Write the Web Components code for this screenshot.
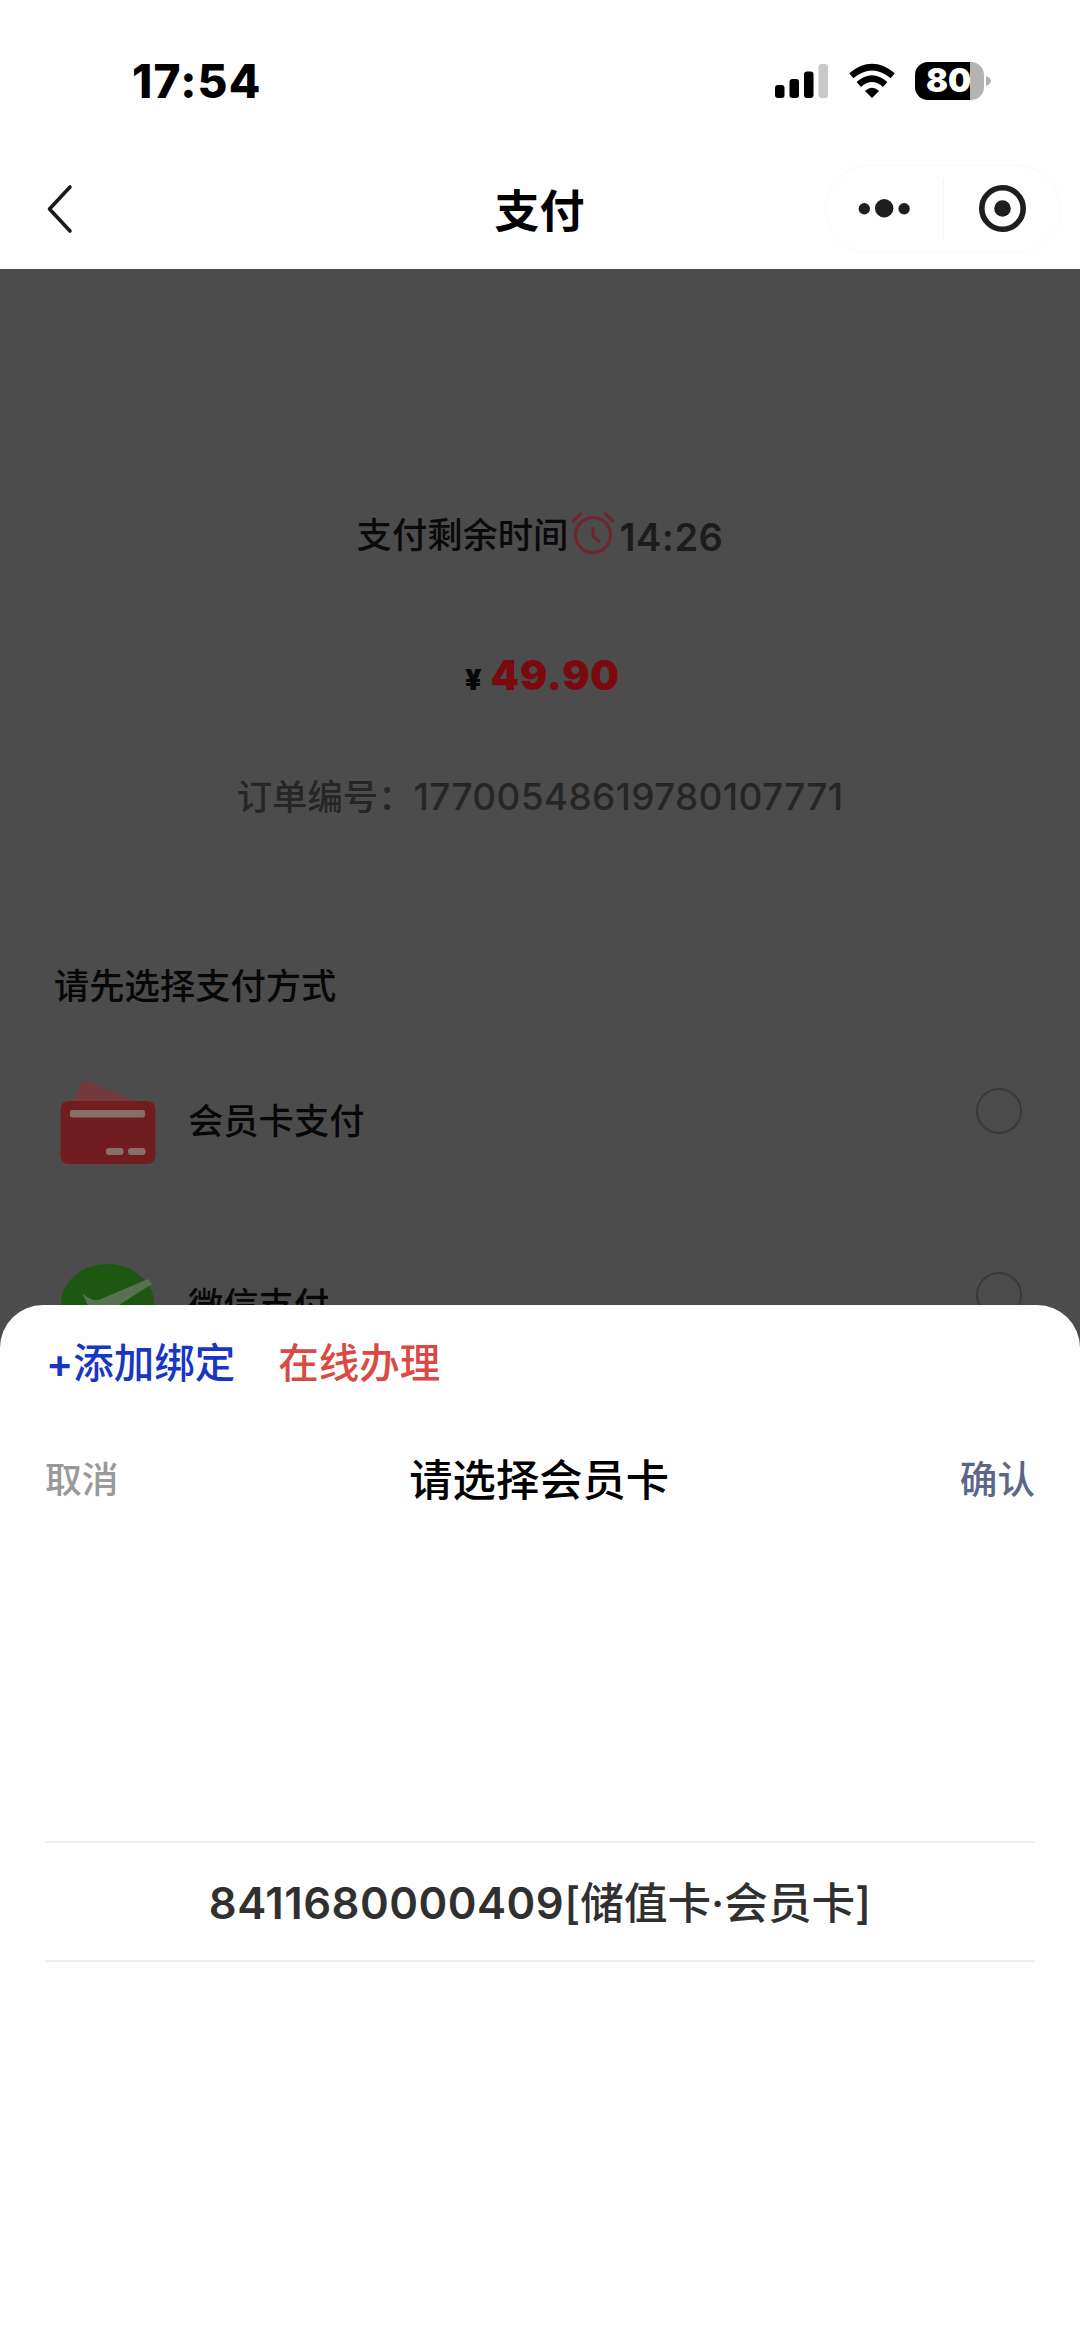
<!DOCTYPE html>
<html lang="zh-CN">
<head>
<meta charset="utf-8">
<title>支付</title>
<style>
	html, body {
		margin: 0;
		height: 2341px;
		overflow: hidden;
		background: #fefefe;
		font-family: Inter, "Noto Sans CJK SC", sans-serif;
	}
</style>
</head>
<body>
<pay-app></pay-app>

<script>
class StatusBar extends HTMLElement {
	constructor() {
		super();
		this.attachShadow({ mode: "open" });
		this.shadowRoot.innerHTML = `
			<style>
				:host {
					display: flex;
					justify-content: space-between;
					align-items: center;
					box-sizing: border-box;
					height: 161px;
					padding: 0 88px 0 132px;
				}
				.time { font-size: 46px; font-weight: 800; line-height: 56px; letter-spacing: 1.2px; }
				.icons { display: flex; align-items: center; height: 40px; }
				.wifi { margin-left: 20px; }
				.battery {
					display: flex;
					align-items: center;
					justify-content: center;
					width: 69px;
					height: 38px;
					margin-left: 20px;
					border-radius: 13px;
					background: linear-gradient(90deg, #000 55px, #b3b3b3 55px);
					color: #fff;
					font-size: 32.5px;
					font-weight: 900;
					line-height: 38px;
					box-sizing: border-box;
					padding-right: 2px;
				}
				.nub { margin-left: 2px; }
			</style>
			<span class="time">17:54</span>
			<div class="icons">
				<svg width="54" height="36" viewBox="0 0 54 36">
					<rect x="0" y="22" width="9.5" height="13" rx="3"/>
					<rect x="14.5" y="16" width="9.5" height="19" rx="3"/>
					<rect x="29" y="8.5" width="9.5" height="26.5" rx="3"/>
					<rect x="43.5" y="1" width="9.5" height="34" rx="3" fill="#c8c8c8"/>
				</svg>
				<svg class="wifi" width="46" height="36" viewBox="0 0 46 36">
					<g fill="none" stroke="#000" stroke-width="6.6">
						<path d="M2.3 12.8 Q23 -4.4 43.7 12.8"/>
						<path d="M9.8 21.4 Q23 9.8 36.2 21.4"/>
					</g>
					<path d="M16 28 Q23 21.5 30 28 L23 35 Z"/>
				</svg>
				<span class="battery">80</span>
				<svg class="nub" width="6" height="12" viewBox="0 0 6 12"><path d="M0 1 Q5 3 5 6 T0 11Z" fill="#b3b3b3"/></svg>
			</div>
		`;
	}
}
customElements.define("status-bar", StatusBar);

class NavBar extends HTMLElement {
	constructor() {
		super();
		this.attachShadow({ mode: "open" });
		this.shadowRoot.innerHTML = `
			<style>
				:host {
					display: grid;
					grid-template-columns: 255px 1fr 255px;
					align-items: center;
					box-sizing: border-box;
					height: 108px;
					padding: 0 19px 12px 20px;
				}
				.back { margin-left: 25px; display: block; }
				h1 { margin: 0; padding: 6px 2px 0 0; font-size: 45px; font-weight: 700; line-height: 64px; text-align: center; }
				.capsule {
					display: flex;
					align-items: center;
					justify-self: end;
					box-sizing: border-box;
					width: 236px;
					height: 88px;
					border: 1px solid #f9f9f9;
					border-radius: 44px;
				}
				.line { width: 1px; height: 60px; background: #f5f5f5; }
			</style>
			<svg class="back" width="30" height="50" viewBox="0 0 30 50">
				<path d="M25 3 L4.5 25 L25 47" fill="none" stroke="#1a1a1a" stroke-width="3.6" stroke-linecap="round" stroke-linejoin="round"/>
			</svg>
			<h1><slot></slot></h1>
			<div class="capsule">
				<svg width="117" height="60" viewBox="0 0 117 60" fill="#1e1e1e">
					<circle cx="38.3" cy="29.7" r="5.7"/><circle cx="58.2" cy="29.2" r="9.2"/><circle cx="78.1" cy="29.7" r="5.7"/>
				</svg>
				<span class="line"></span>
				<svg width="116" height="60" viewBox="0 0 116 60">
					<circle cx="58.5" cy="29.5" r="20.7" fill="none" stroke="#1e1e1e" stroke-width="5.6"/>
					<circle cx="58.5" cy="29.5" r="8.3" fill="#1e1e1e"/>
				</svg>
			</div>
		`;
	}
}
customElements.define("nav-bar", NavBar);

class OrderSummary extends HTMLElement {
	constructor() {
		super();
		this.attachShadow({ mode: "open" });
		this.shadowRoot.innerHTML = `
			<style>
				:host { display: flex; flex-direction: column; align-items: center; padding-top: 235px; }
				.row { display: flex; align-items: center; white-space: nowrap; }
				.countdown { height: 60px; font-size: 35.3px; font-weight: 500; color: #0a0a0a; }
				.countdown > span:first-child { padding-bottom: 4px; }
				.countdown svg { margin: 0 4px 5px 3px; }
				.clock { padding-top: 5px; font-size: 38px; font-weight: 560; letter-spacing: 0.5px; color: #1c1c1c; }
				.price { height: 60px; margin-top: 82px; align-items: baseline; line-height: 60px; gap: 8px; padding-left: 5px; color: #7a0a0e; font-size: 40.5px; font-weight: 900; letter-spacing: 0.9px; }
				.price small { font-size: 28.5px; color: #080808; }
				.order { height: 60px; margin-top: 60px; font-size: 35.4px; font-weight: 500; color: #262626; }
				.order > span:first-child { padding-bottom: 4px; }
				.no { font-size: 37px; letter-spacing: 0.3px; }
			</style>
			<div class="row countdown">
				<span>支付剩余时间</span>
				<svg width="44" height="44" viewBox="0 0 44 44" fill="none" stroke="#70252f" stroke-width="3">
					<circle cx="22" cy="25" r="17.5"/>
					<path d="M22 17 V26 L28.5 32 M1.5 12 L10.5 3 M33.5 3 L42.5 12"/>
				</svg>
				<span class="clock">14:26</span>
			</div>
			<div class="row price"><small>¥</small><span>49.90</span></div>
			<div class="row order"><span>订单编号：</span><span class="no">17700548619780107771</span></div>
		`;
	}
}
customElements.define("order-summary", OrderSummary);

class PayMethod extends HTMLElement {
	constructor() {
		super();
		this.attachShadow({ mode: "open" });
		this.shadowRoot.innerHTML = `
			<style>
				:host { display: flex; align-items: center; height: 184px; font-size: 35.3px; font-weight: 500; color: #070707; }
				.label { flex: 1; margin-left: 31px; padding-bottom: 8px; }
				.radio { box-sizing: border-box; width: 46px; height: 46px; margin-bottom: 22px; border: 2.5px solid #3a3a3a; border-radius: 50%; }
			</style>
			<slot name="icon"></slot>
			<span class="label"><slot></slot></span>
			<span class="radio"></span>
		`;
	}
}
customElements.define("pay-method", PayMethod);

class BottomSheet extends HTMLElement {
	constructor() {
		super();
		this.attachShadow({ mode: "open" });
		this.shadowRoot.innerHTML = `
			<style>
				:host {
					position: absolute;
					left: 0;
					right: 0;
					top: 1305px;
					bottom: 0;
					box-sizing: border-box;
					padding: 0 45px;
					background: #fefefe;
					border-radius: 43px 43px 0 0;
				}
				.links { display: flex; gap: 43px; padding: 29px 1px 0; font-size: 40.5px; font-weight: 500; line-height: 60px; }
				.plus { font-weight: 600; }
				.add { color: #1836c4; }
				.apply { color: #d94a45; }
				.head { display: flex; justify-content: space-between; align-items: center; height: 60px; margin-top: 56px; font-size: 36.8px; font-weight: 500; }
				.cancel { padding-bottom: 6px; color: #999; }
				.title { font-size: 43.3px; line-height: 60px; }
				.ok { padding-bottom: 7px; font-size: 37.6px; color: #5c6788; }
				.picker {
					display: flex;
					align-items: baseline;
					justify-content: center;
					box-sizing: border-box;
					height: 121px;
					margin-top: 331px;
					border: solid #eee;
					border-width: 2px 0;
					color: #303030;
					font-size: 43.6px;
					font-weight: 500;
					line-height: 122px;
					white-space: nowrap;
				}
				.no { font-weight: 560; letter-spacing: 0.5px; }
			</style>
			<div class="links"><span class="add"><span class="plus">+</span>添加绑定</span><span class="apply">在线办理</span></div>
			<div class="head"><span class="cancel">取消</span><span class="title">请选择会员卡</span><span class="ok">确认</span></div>
			<div class="picker"><span class="no"><slot name="no"></slot></span><span><slot></slot></span></div>
		`;
	}
}
customElements.define("bottom-sheet", BottomSheet);

class PayApp extends HTMLElement {
	constructor() {
		super();
		this.attachShadow({ mode: "open" });
		this.shadowRoot.innerHTML = `
			<style>
				:host { display: flex; flex-direction: column; position: relative; width: 1080px; height: 2341px; overflow: hidden; }
				main { flex: 1; background: #4c4c4c; }
				section { padding: 0 58px 0 54px; }
				h2 { margin: 131px 0 0; font-size: 35.3px; font-weight: 500; line-height: 60px; color: #070707; }
				.methods { margin-top: 13px; }
				pay-method svg { display: block; margin-left: 5px; }
			</style>
			<status-bar></status-bar>
			<nav-bar>支付</nav-bar>
			<main>
				<order-summary></order-summary>
				<section>
					<h2>请先选择支付方式</h2>
					<div class="methods">
						<pay-method>
							<svg slot="icon" width="98" height="88" viewBox="0 0 98 88">
								<path d="M13 28 L21 8 Q24 1 32 4 L80 25 V30 Z" fill="#74393c"/>
								<rect x="1.5" y="23" width="95" height="63" rx="8" fill="#701c20"/>
								<g fill="#87706a">
									<rect x="11" y="32" width="75" height="7.5" rx="2"/>
									<rect x="47" y="70" width="17.5" height="7" rx="3"/>
									<rect x="69" y="70" width="17.5" height="7" rx="3"/>
								</g>
							</svg>
							会员卡支付
						</pay-method>
						<pay-method>
							<svg slot="icon" width="98" height="88" viewBox="0 0 98 88">
								<ellipse cx="48.5" cy="42" rx="46.5" ry="40" fill="#1d5711"/>
								<path d="M23 31 Q34 41 42 37 L89 17 L93 22 L44 53 Q36 57 32 50 Z" fill="#56724f"/>
							</svg>
							微信支付
						</pay-method>
					</div>
				</section>
			</main>
			<bottom-sheet><span slot="no">8411680000409</span>[储值卡·会员卡]</bottom-sheet>
		`;
	}
}
customElements.define("pay-app", PayApp);
</script>
</body>
</html>
